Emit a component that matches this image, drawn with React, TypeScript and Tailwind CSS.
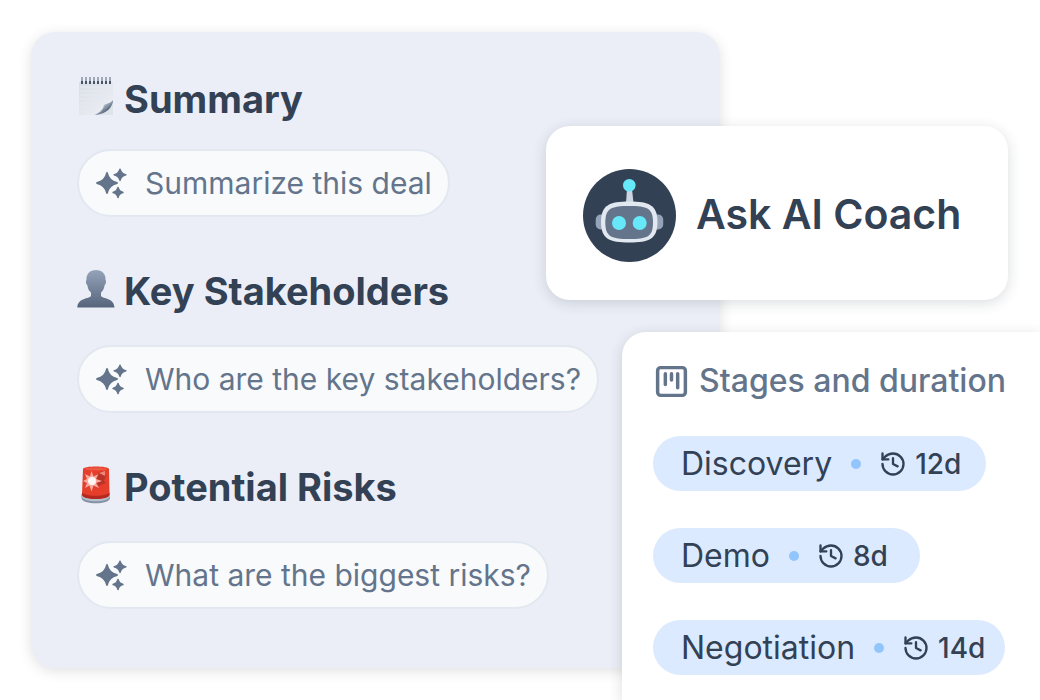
import type { ReactNode } from "react";
import { History, SquareKanban } from "lucide-react";

function NotepadIcon() {
  return (
    <svg viewBox="0 3 38 42" className="h-[42px] w-[38px] shrink-0 overflow-visible" aria-hidden="true">
      <defs>
        <linearGradient id="paper" x1="0" y1="0" x2="1" y2="1">
          <stop offset="0" stopColor="#d8dde6" />
          <stop offset="1" stopColor="#eff2f6" />
        </linearGradient>
        <linearGradient id="curl" x1="0" y1="0" x2="1" y2="1">
          <stop offset="0.25" stopColor="#f4f6f9" />
          <stop offset="0.5" stopColor="#9aa6b6" />
          <stop offset="0.7" stopColor="#56657c" />
        </linearGradient>
      </defs>
      <path d="M2 7h34v18L20 40H2z" fill="url(#paper)" />
      <path
        d="M3 12h32M3 16h32M3 20h32M3 24h29M3 28h24M3 32h18M3 36h15"
        stroke="#e6eaf0"
        strokeWidth="1"
      />
      <path d="M36 25v15H18z" fill="#dfe3ea" />
      <path d="M36 25c-2 3-5 3-9 5-1 5-4 8-10 10 9 0 17-5 19-13z" fill="url(#curl)" />
      <path
        d="M5 2v6M9 2v6M13 2v6M17 2v6M21 2v6M25 2v6M29 2v6M33 2v6"
        stroke="#8793a5"
        strokeWidth="1.500"
      />
      <path
        d="M5 6v3M9 6v3M13 6v3M17 6v3M21 6v3M25 6v3M29 6v3M33 6v3"
        stroke="#475569"
        strokeWidth="2"
      />
    </svg>
  );
}

function PersonIcon() {
  return (
    <svg viewBox="0 2 38 42" className="h-[42px] w-[38px] shrink-0 overflow-visible" aria-hidden="true">
      <defs>
        <linearGradient id="person" x1="0" y1="0" x2="0" y2="1">
          <stop offset="0" stopColor="#94a3b8" />
          <stop offset="1" stopColor="#56657c" />
        </linearGradient>
      </defs>
      <path
        d="M19 2c6 0 10 4 9.500 10 .8 0 .8 4-.8 5-.7 4-2 6-3.700 7.500v3.500c2 3 13 1.500 13.500 11.500H.3C1 29.500 12 31 14 28v-3.500C12 23 11 21 10.300 17c-1.600-1-1.600-5-.8-5C9 6 13 2 19 2z"
        fill="url(#person)"
      />
    </svg>
  );
}

function SirenIcon() {
  return (
    <svg viewBox="0 1 38 42" className="h-[42px] w-[38px] shrink-0 overflow-visible" aria-hidden="true">
      <path d="M4.500 29v4c0 7 28.500 7 28.500 0v-4z" fill="#8492a6" />
      <path d="M4.500 29v2c0 7 28.500 7 28.500 0v-2z" fill="#b4bfcc" />
      <path d="M6 4c0-3.500 26-3.500 26 0l.5 25.500c0 6-27.500 6-27.500 0z" fill="#e53e2b" />
      <path d="M5.200 27c1 5 26 5 27.200 0v2.500c0 6-27.400 6-27.400 0z" fill="#b4291f" />
      <path d="M7.500 4c3-2 20-2 23 0-4 2-19 2-23 0z" fill="#ee5743" />
      <path d="M19 10l6-4 4 4-2 6 2 2-8 3z" fill="#b93328" />
      <path d="M22 8l6-2v5z" fill="#f08577" />
      <path
        d="M14.500 6l2 5.500 5-2.500-2.500 5 6 2-6 2 3 5-5.500-2.500-2 6-2-6-4.500 2.500 2-5-4-2 4-2-2-5 5 2.500z"
        fill="#f9aba0"
      />
      <circle cx="15" cy="16" r="4" fill="#fff5f2" />
    </svg>
  );
}

function SparklesIcon() {
  return (
    <svg
      viewBox="0 0 31 31"
      className="size-[31px] shrink-0 text-[#64748b]"
      fill="currentColor"
      stroke="currentColor"
      strokeLinejoin="round"
      aria-hidden="true"
    >
      <path d="M11 5q1.800 8.200 10 10-8.200 1.800-10 10-1.800-8.200-10-10 8.200-1.800 10-10z" strokeWidth="1.800" />
      <path d="M24 1.200q1.200 4.600 5.800 5.600-4.600 1-5.800 5.600-1.200-4.600-5.800-5.600 4.600-1 5.800-5.600z" strokeWidth="1.500" />
      <path d="M22 19.500q1 4 5 5-4 1-5 5-1-4-5-5 4-1 5-5z" strokeWidth="1.500" />
    </svg>
  );
}

function RobotAvatar() {
  return (
    <svg viewBox="0 0 93 93" className="size-[93px] shrink-0" aria-hidden="true">
      <circle cx="46.500" cy="46.500" r="46.500" fill="#334155" />
      <rect x="12.700" y="45.500" width="67.500" height="15" rx="5" fill="#94a3b8" />
      <path d="M44 20h5l1.500 14h-7.500z" fill="#cbd5e1" />
      <circle cx="46.300" cy="16.200" r="6.300" fill="#67e8f9" />
      <path
        d="M46.300 32.500C66 32.500 74.500 36 74.500 53S66 73.500 46.300 73.500 18 70 18 53s8.500-20.500 28.300-20.500z"
        fill="#e2e8f0"
      />
      <path
        d="M46.300 37C64 37 70 39 70 53.500S64 70 46.300 70s-24-2-24-16.500S28.600 37 46.300 37z"
        fill="#64748b"
      />
      <circle cx="36" cy="54" r="7" fill="#67e8f9" />
      <circle cx="56.700" cy="54" r="7" fill="#67e8f9" />
    </svg>
  );
}

type Section = { title: string; prompt: string; icon: ReactNode };

const SECTIONS: Section[] = [
  { title: "Summary", prompt: "Summarize this deal", icon: <NotepadIcon /> },
  { title: "Key Stakeholders", prompt: "Who are the key stakeholders?", icon: <PersonIcon /> },
  { title: "Potential Risks", prompt: "What are the biggest risks?", icon: <SirenIcon /> },
];

const STAGES = [
  { name: "Discovery", duration: "12d", pad: "pr-[25px]" },
  { name: "Demo", duration: "8d", pad: "pr-8" },
  { name: "Negotiation", duration: "14d", pad: "pr-5" },
];

export default function App() {
  return (
    <main className="relative min-h-screen overflow-hidden bg-white py-8 pl-[31px] font-['Inter',sans-serif] text-[#334155] [font-optical-sizing:none]">
      <div className="mr-80 flex flex-col gap-[50px] rounded-3xl bg-[#ebeef6] px-[46px] pt-[43px] pb-[59px] shadow-[0_3px_14px_rgba(0,0,0,0.12)]">
        {SECTIONS.map((s) => (
          <section key={s.title} className="flex flex-col items-start gap-[30px] first:gap-[26px]">
            <h2 className="flex items-center gap-[9px] text-[38px] leading-[48px] font-bold whitespace-nowrap">
              {s.icon}
              {s.title}
            </h2>
            <button
              type="button"
              className="flex h-[68px] items-center gap-[18px] rounded-full border-2 border-[#e2e8f0] bg-[#f8fafc] pr-4 pl-[17px] text-[30px] whitespace-nowrap text-[#64748b]"
            >
              <SparklesIcon />
              {s.prompt}
            </button>
          </section>
        ))}
      </div>

      {/* Floating call to action */}
      <button
        type="button"
        className="absolute top-[126px] right-8 flex h-[174px] w-[462px] items-center gap-5 rounded-3xl bg-white pt-1 pl-[37px] text-[41px] font-semibold whitespace-nowrap shadow-[0_3px_14px_rgba(30,41,59,0.16)]"
      >
        <RobotAvatar />
        Ask AI Coach
      </button>

      {/* Stage durations, docked to the bottom right corner */}
      <section className="absolute top-[332px] right-0 bottom-0 w-[418px] rounded-tl-3xl bg-white pt-[30px] pl-[31px] shadow-[0_3px_14px_rgba(30,41,59,0.16)]">
        <h2 className="flex items-center gap-[9px] text-[32px] leading-[38px] font-medium whitespace-nowrap text-[#64748b]">
          <SquareKanban size={37} strokeWidth={2.25} aria-hidden="true" />
          Stages and duration
        </h2>
        <ul className="mt-9 flex flex-col items-start gap-[37px]">
          {STAGES.map((s) => (
            <li
              key={s.name}
              className={`flex h-[55px] items-center rounded-full bg-[#dbeafe] pl-7 whitespace-nowrap ${s.pad}`}
            >
              <span className="text-[32px]">{s.name}</span>
              <span className="mr-[18px] ml-[19px] size-[10px] rounded-full bg-[#93c5fd]" />
              <History size={28} className="mr-2" aria-hidden="true" />
              <span className="text-[28px] font-medium">{s.duration}</span>
            </li>
          ))}
        </ul>
      </section>
    </main>
  );
}
